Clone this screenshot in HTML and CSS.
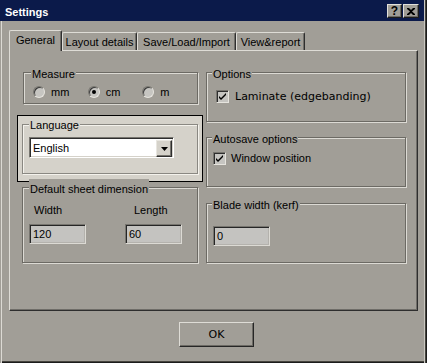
FILE: index.html
```html
<!DOCTYPE html>
<html lang="en">
<head>
  <meta charset="UTF-8">
  <meta name="viewport" content="width=device-width, initial-scale=1.0">
  <title>Settings</title>
  <link rel="stylesheet" href="styles.css">
</head>
<body>

  <div class="window">
    <div class="titlebar">
      <span class="title">Settings</span>
      <div class="title-buttons">
        <span class="tbtn help">?</span>
        <span class="tbtn close">
          <svg width="8" height="7" viewBox="0 0 8 7"><path d="M0 0h2l2 2 2-2h2v1L5 3.5 8 6v1H6L4 5 2 7H0V6l3-2.5L0 1z" fill="#000"/></svg>
        </span>
      </div>
    </div>

    <div class="dialog">
      <div class="tabs">
        <div class="tab active">General</div>
        <div class="tab tab-layout">Layout details</div>
        <div class="tab tab-save">Save/Load/Import</div>
        <div class="tab tab-view">View&amp;report</div>
      </div>

      <div class="panel">
        <div class="col col-left">
          <fieldset class="group measure">
            <legend>Measure</legend>
            <div class="radios">
              <label class="radio"><span class="dot"></span>mm</label>
              <label class="radio"><span class="dot checked"></span>cm</label>
              <label class="radio"><span class="dot"></span>m</label>
            </div>
          </fieldset>

          <div class="lang-box">
            <fieldset class="group lang">
              <legend>Language</legend>
              <div class="select">
                <span class="select-text">English</span>
                <span class="drop">
                  <svg width="7" height="4" viewBox="0 0 7 4"><path d="M0 0h7L3.5 4z" fill="#000"/></svg>
                </span>
              </div>
            </fieldset>
          </div>

          <fieldset class="group sheet">
            <legend>Default sheet dimension</legend>
            <div class="dims">
              <div class="dim">
                <div class="dim-label">Width</div>
                <div class="field">120</div>
              </div>
              <div class="dim dim-length">
                <div class="dim-label">Length</div>
                <div class="field">60</div>
              </div>
            </div>
          </fieldset>
        </div>

        <div class="col col-right">
          <fieldset class="group options">
            <legend>Options</legend>
            <label class="check laminate">
              <span class="box"><svg width="9" height="9" viewBox="0 0 9 9"><path d="M1 4l2 2 5-5v2L3 8 1 6z" fill="#000"/></svg></span>
              Laminate (edgebanding)
            </label>
          </fieldset>

          <fieldset class="group autosave">
            <legend>Autosave options</legend>
            <label class="check">
              <span class="box"><svg width="9" height="9" viewBox="0 0 9 9"><path d="M1 4l2 2 5-5v2L3 8 1 6z" fill="#000"/></svg></span>
              Window position
            </label>
          </fieldset>

          <fieldset class="group blade">
            <legend>Blade width (kerf)</legend>
            <div class="field">0</div>
          </fieldset>
        </div>
      </div>

      <div class="footer">
        <button class="ok-btn">OK</button>
      </div>
    </div>
  </div>

</body>
</html>
```

FILE: styles.css
```css
body {
  margin: 0;
  font-family: "Liberation Sans", Arial, sans-serif;
  font-size: 11px;
  color: #000;
  background-color: #a19e97;
}

.window {
  width: 427px;
  height: 363px;
  box-sizing: border-box;
  background-color: #a19e97;
  box-shadow: inset 1px 0 0 #a19e97, inset 2px 0 0 #dcdad4,
    inset -1px 0 0 #1c1c1c, inset -2px 0 0 #46453f, inset -3px 0 0 #c9c7c1,
    inset 0 -1px 0 #1c1c1c, inset 0 -2px 0 #46453f;
}

/* title bar */
.titlebar {
  height: 21px;
  margin-right: 3px;
  background-color: #0b1a4a;
  display: flex;
  justify-content: space-between;
  align-items: flex-start;
  padding: 0 5px 0 5px;
}

.title {
  color: #fff;
  font-weight: bold;
  line-height: 13px;
  margin-top: 6px;
}

.title-buttons {
  display: flex;
  gap: 1px;
  margin-top: 4px;
}

.tbtn {
  width: 15px;
  height: 14px;
  box-sizing: border-box;
  background-color: #a19e97;
  border: 1px solid;
  border-color: #e2e0da #1c1c1c #1c1c1c #e2e0da;
  box-shadow: inset -1px -1px 0 #6c6a64;
  display: flex;
  align-items: center;
  justify-content: center;
  font-weight: bold;
  font-size: 12px;
  line-height: 12px;
}

.tbtn.close {
  width: 16px;
}

/* tabs */
.dialog {
  padding: 9px 3px 0 9px;
}

.tabs {
  display: flex;
  align-items: flex-end;
  height: 20px;
}

.tab {
  height: 18px;
  box-sizing: border-box;
  padding-top: 3px;
  line-height: 13px;
  text-align: center;
  border-top: 1px solid #dedcd6;
  border-left: 1px solid #dedcd6;
  border-right: 1px solid #2e2e2e;
  border-radius: 2px 2px 0 0;
  box-shadow: inset -1px 0 0 #6f6d68;
}

.tab.active {
  width: 53px;
  height: 21px;
  margin-bottom: -1px;
  position: relative;
  z-index: 1;
  background-color: #a19e97;
}

.tab-layout {
  width: 75px;
}

.tab-save {
  width: 99px;
}

.tab-view {
  width: 69px;
}

/* tab page */
.panel {
  width: 409px;
  height: 261px;
  box-sizing: border-box;
  border: 1px solid;
  border-color: #dedcd6 #2e2e2e #2e2e2e #dedcd6;
  box-shadow: inset -1px -1px 0 #6f6d68;
  display: flex;
  gap: 3px;
  padding: 13px 0 0 7px;
}

.col-left {
  width: 186px;
}

.col-right {
  width: 200px;
}

.group {
  margin: 0;
  padding: 0;
  min-width: 0;
  box-sizing: border-box;
  border: 1px solid #6c6a64;
  box-shadow: 1px 1px 0 #dcdad4, inset 1px 1px 0 #dcdad4;
}

.group legend {
  padding: 4px 1px 0;
  margin-left: 6px;
  line-height: 13px;
  background-color: #a19e97;
}

.col-right .group legend {
  margin-left: 5px;
}

.measure {
  width: 175px;
  height: 40px;
  margin-left: 6px;
}

.measure legend {
  margin-left: 7px;
}

.radios {
  display: flex;
  padding-left: 9px;
  margin-top: 5px;
}

.radio {
  width: 55px;
  display: flex;
  align-items: center;
  gap: 6px;
  line-height: 12px;
}

.dot {
  width: 12px;
  height: 12px;
  box-sizing: border-box;
  border-radius: 50%;
  background-color: #c6c5c1;
  border: 1px solid;
  border-color: #77756f #e6e4de #e6e4de #77756f;
  box-shadow: inset 1px 1px 0 #3a3a3a;
  display: flex;
  align-items: center;
  justify-content: center;
}

.dot.checked::after {
  content: "";
  width: 4px;
  height: 4px;
  border-radius: 50%;
  background-color: #000;
}

/* language */
.lang-box {
  height: 67px;
  margin-top: 11px;
  box-sizing: border-box;
  border: 1px solid #000;
  background-color: #d5d2ca;
}

.lang {
  width: 176px;
  height: 58px;
  margin-left: 4px;
  border-color: #8a8882;
  box-shadow: 1px 1px 0 #f4f2ec, inset 1px 1px 0 #f4f2ec;
}

.lang legend {
  padding-top: 3px;
  background-color: #d5d2ca;
}

.select {
  width: 145px;
  height: 21px;
  margin: 5px 0 0 6px;
  box-sizing: border-box;
  background-color: #fff;
  border: 1px solid;
  border-color: #77756f #fff #fff #77756f;
  box-shadow: inset 1px 1px 0 #2e2e2e, inset -1px -1px 0 #d5d2ca;
  display: flex;
  justify-content: space-between;
  padding: 2px 1px 1px 3px;
}

.select-text {
  line-height: 17px;
}

.drop {
  width: 16px;
  height: 17px;
  box-sizing: border-box;
  background-color: #d5d2ca;
  border: 1px solid;
  border-color: #e8e6e0 #2e2e2e #2e2e2e #e8e6e0;
  box-shadow: inset -1px -1px 0 #77756f;
  display: flex;
  align-items: center;
  justify-content: center;
}

/* sheet size */
.sheet {
  width: 176px;
  height: 84px;
  margin: -3px 0 0 5px;
}

.dims {
  display: flex;
  gap: 39px;
  padding-left: 6px;
  margin-top: 8px;
}

.dim-label {
  line-height: 13px;
  padding-left: 5px;
  margin-bottom: 7px;
}

.dim-length .dim-label {
  padding-left: 9px;
}

.field {
  width: 57px;
  height: 20px;
  box-sizing: border-box;
  background-color: #c4c3c0;
  border: 1px solid;
  border-color: #77756f #dcdad4 #dcdad4 #77756f;
  box-shadow: inset 1px 1px 0 #262626, inset -1px -1px 0 #b4b2ad;
  padding: 1px 0 0 3px;
  line-height: 16px;
}

/* right column */
.options {
  height: 58px;
}

.check {
  display: flex;
  align-items: center;
  gap: 5px;
  line-height: 13px;
}

.options .check {
  margin: 9px 0 0 9px;
  gap: 6px;
}

.laminate {
  font-family: "DejaVu Sans", sans-serif;
  font-size: 11px;
}

.box {
  width: 13px;
  height: 13px;
  box-sizing: border-box;
  background-color: #c6c5c1;
  border: 1px solid;
  border-color: #77756f #e6e4de #e6e4de #77756f;
  box-shadow: inset 1px 1px 0 #2e2e2e;
  display: flex;
  align-items: center;
  justify-content: center;
}

.autosave {
  height: 58px;
  margin-top: 7px;
}

.autosave .check {
  margin: 6px 0 0 6px;
}

.blade {
  height: 68px;
  margin-top: 8px;
}

.blade .field {
  margin: 14px 0 0 6px;
}

/* bottom */
.footer {
  display: flex;
  justify-content: center;
  padding-top: 11px;
}

.ok-btn {
  width: 75px;
  height: 25px;
  box-sizing: border-box;
  background-color: #a19e97;
  border: 1px solid;
  border-color: #dedcd6 #262626 #262626 #dedcd6;
  box-shadow: inset -1px -1px 0 #6c6a64;
  font-family: "DejaVu Sans", sans-serif;
  font-size: 11px;
  color: #000;
  padding: 0;
}
```
